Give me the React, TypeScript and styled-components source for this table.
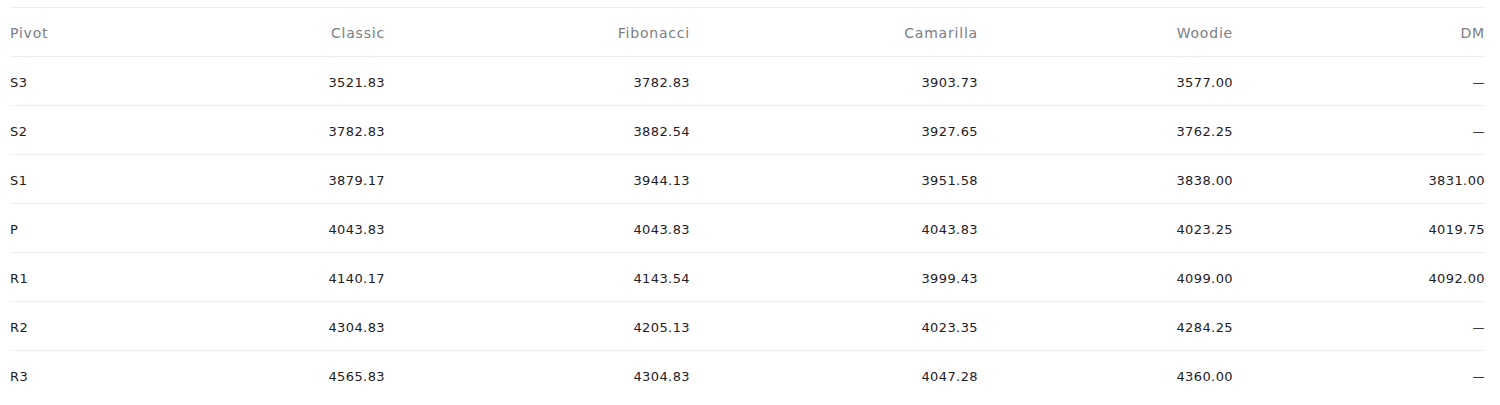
import React from "react";
import styled, { createGlobalStyle } from "styled-components";

const Global = createGlobalStyle`
  html, body { margin: 0; padding: 0; background: #ffffff; }
  body { font-family: "DejaVu Sans", Verdana, sans-serif; }
`;

const Page = styled.div`
  padding: 7px 15px 0 10px;
  width: 1475px;
`;

const Row = styled.div`
  display: grid;
  grid-template-columns: 188px 187px 305px 288px 255px 252px;
  height: 49px;
  border-top: 1px solid #eceef2;
  box-sizing: border-box;
  align-items: center;
  padding-top: 2px;
`;

const Cell = styled.div<{ $head?: boolean; $left?: boolean }>`
  font-size: ${(p) => (p.$head ? "14px" : "13px")};
  letter-spacing: ${(p) => (p.$head ? "0.8px" : "0.4px")};
  text-align: ${(p) => (p.$left ? "left" : "right")};
  color: ${(p) => (p.$head ? "#7b7e88" : "#1f2026")};
  white-space: nowrap;
`;

const Dash = styled.span`
  color: #3a3c42;
  font-size: 12px;
`;

const headers = ["Pivot", "Classic", "Fibonacci", "Camarilla", "Woodie", "DM"];

const rows: [string, string, string, string, string, string | null][] = [
  ["S3", "3521.83", "3782.83", "3903.73", "3577.00", null],
  ["S2", "3782.83", "3882.54", "3927.65", "3762.25", null],
  ["S1", "3879.17", "3944.13", "3951.58", "3838.00", "3831.00"],
  ["P", "4043.83", "4043.83", "4043.83", "4023.25", "4019.75"],
  ["R1", "4140.17", "4143.54", "3999.43", "4099.00", "4092.00"],
  ["R2", "4304.83", "4205.13", "4023.35", "4284.25", null],
  ["R3", "4565.83", "4304.83", "4047.28", "4360.00", null],
];

export default function App() {
  return (
    <>
      <Global />
      <Page>
        <Row>
          {headers.map((h, i) => (
            <Cell key={h} $head $left={i === 0}>
              {h}
            </Cell>
          ))}
        </Row>
        {rows.map((r) => (
          <Row key={r[0]}>
            {r.map((v, i) => (
              <Cell key={i} $left={i === 0}>
                {v === null ? <Dash>—</Dash> : v}
              </Cell>
            ))}
          </Row>
        ))}
      </Page>
    </>
  );
}
